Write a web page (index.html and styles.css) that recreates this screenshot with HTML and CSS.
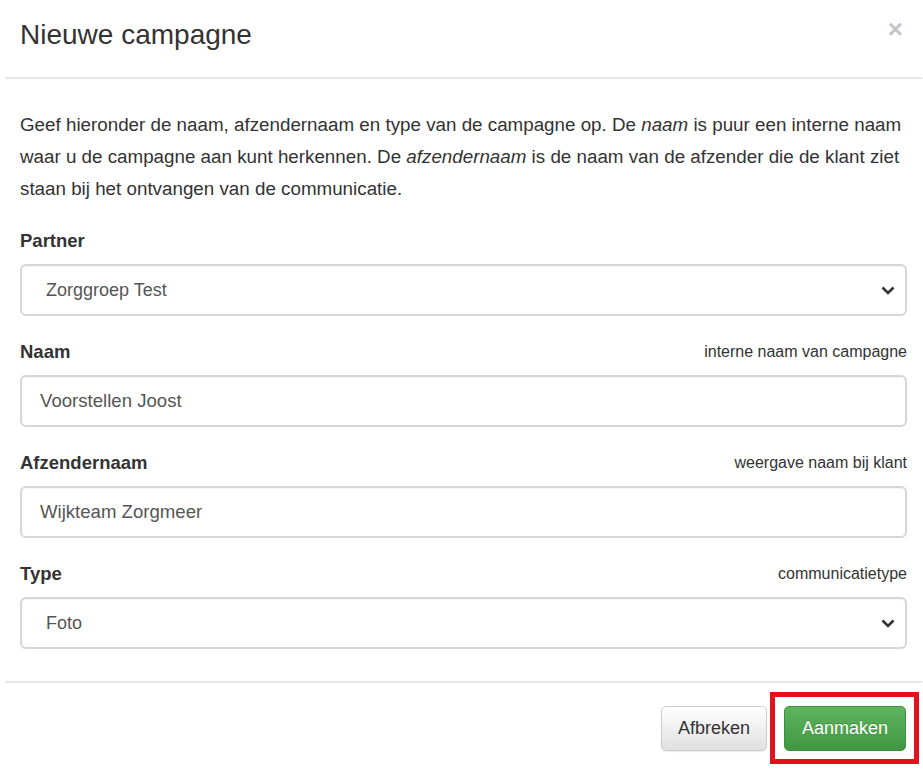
FILE: index.html
```html
<!DOCTYPE html>
<html lang="nl">
<head>
<meta charset="utf-8">
<title>Nieuwe campagne</title>
<link rel="stylesheet" href="styles.css">
</head>
<body>
<div class="modal">
  <div class="modal-header">
    <h4 class="modal-title">Nieuwe campagne</h4>
    <span class="close">×</span>
  </div>
  <div class="modal-body">
    <p class="intro">Geef hieronder de naam, afzendernaam en type van de campagne op. De <em>naam</em> is puur een interne naam waar u de campagne aan kunt herkennen. De <em>afzendernaam</em> is de naam van de afzender die de klant ziet staan bij het ontvangen van de communicatie.</p>

    <div class="field">
      <div class="field-head"><label>Partner</label></div>
      <div class="control select">
        <span class="value sel">Zorggroep Test</span>
        <svg class="chev" width="14" height="9" viewBox="0 0 14 9"><path d="M1.5 1.5 L7 7 L12.5 1.5" fill="none" stroke="#333" stroke-width="2.6"/></svg>
      </div>
    </div>

    <div class="field">
      <div class="field-head"><label>Naam</label><span class="hint">interne naam van campagne</span></div>
      <div class="control"><span class="value">Voorstellen Joost</span></div>
    </div>

    <div class="field">
      <div class="field-head"><label>Afzendernaam</label><span class="hint">weergave naam bij klant</span></div>
      <div class="control"><span class="value">Wijkteam Zorgmeer</span></div>
    </div>

    <div class="field">
      <div class="field-head"><label>Type</label><span class="hint">communicatietype</span></div>
      <div class="control select">
        <span class="value sel">Foto</span>
        <svg class="chev" width="14" height="9" viewBox="0 0 14 9"><path d="M1.5 1.5 L7 7 L12.5 1.5" fill="none" stroke="#333" stroke-width="2.6"/></svg>
      </div>
    </div>
  </div>
  <div class="modal-footer">
    <button class="btn btn-default">Afbreken</button>
    <button class="btn btn-success">Aanmaken<span class="highlight"></span></button>
  </div>
</div>
</body>
</html>
```
FILE: styles.css
```css
html, body {
  margin: 0;
  padding: 0;
  background: #fff;
}
body {
  font-family: "Liberation Sans", Arial, sans-serif;
  color: #333;
  overflow: hidden;
}
.modal {
  margin-left: 5px;
  width: 917px;
}
.modal-header {
  height: 79px;
  border-bottom: 2px solid #e5e5e5;
  display: flex;
  align-items: flex-start;
  justify-content: space-between;
  padding: 0 19px 0 15px;
  box-sizing: border-box;
}
.modal-title {
  margin: 19px 0 0;
  font-size: 28px;
  font-weight: normal;
  line-height: 32px;
  color: #333;
}
.close {
  margin-top: 14px;
  font-size: 26px;
  font-weight: bold;
  color: #c4c4c4;
  line-height: 30px;
}
.modal-body {
  padding: 30px 15px 32px;
}
.intro {
  margin: 0 0 24px;
  font-size: 18.8px;
  line-height: 32px;
  color: #333;
}
.field {
  margin-bottom: 24px;
}
.field:last-child {
  margin-bottom: 0;
}
.field-head {
  display: flex;
  justify-content: space-between;
  align-items: center;
  height: 24px;
  margin-bottom: 11px;
}
label {
  font-weight: bold;
  font-size: 18.5px;
  color: #333;
}
.hint {
  font-size: 16px;
  color: #333;
}
.control {
  height: 52px;
  box-sizing: border-box;
  border: 2px solid #d6d6d6;
  border-radius: 6px;
  display: flex;
  align-items: center;
  justify-content: space-between;
  padding: 0 10px 0 18px;
  box-shadow: inset 0 1px 1px rgba(0,0,0,0.04);
}
.value {
  font-size: 18.6px;
  color: #555;
}
.value.sel {
  margin-left: 6px;
  font-size: 18px;
}
.chev {
  display: block;
}
.modal-footer {
  border-top: 2px solid #e5e5e5;
  display: flex;
  justify-content: flex-end;
  gap: 17px;
  padding: 23px 16px 20px 15px;
}
.btn {
  position: relative;
  height: 45px;
  box-sizing: border-box;
  border-radius: 5px;
  font-family: "Liberation Sans", Arial, sans-serif;
  font-size: 18px;
  padding: 0 16px;
  cursor: pointer;
}
.btn-default {
  width: 106px;
  color: #333;
  border: 1px solid #ccc;
  background: linear-gradient(to bottom, #fff 0%, #e0e0e0 100%);
  box-shadow: 0 1px 1px rgba(0,0,0,0.08);
}
.btn-success {
  width: 122px;
  color: #fff;
  border: 1px solid #3e8f3e;
  background: linear-gradient(to bottom, #5fb55f 0%, #419641 100%);
  text-shadow: 0 -1px 0 rgba(0,0,0,0.2);
}
.highlight {
  position: absolute;
  left: -15px;
  top: -15px;
  right: -14px;
  bottom: -14px;
  border: 5px solid #e5101c;
  pointer-events: none;
}
```
